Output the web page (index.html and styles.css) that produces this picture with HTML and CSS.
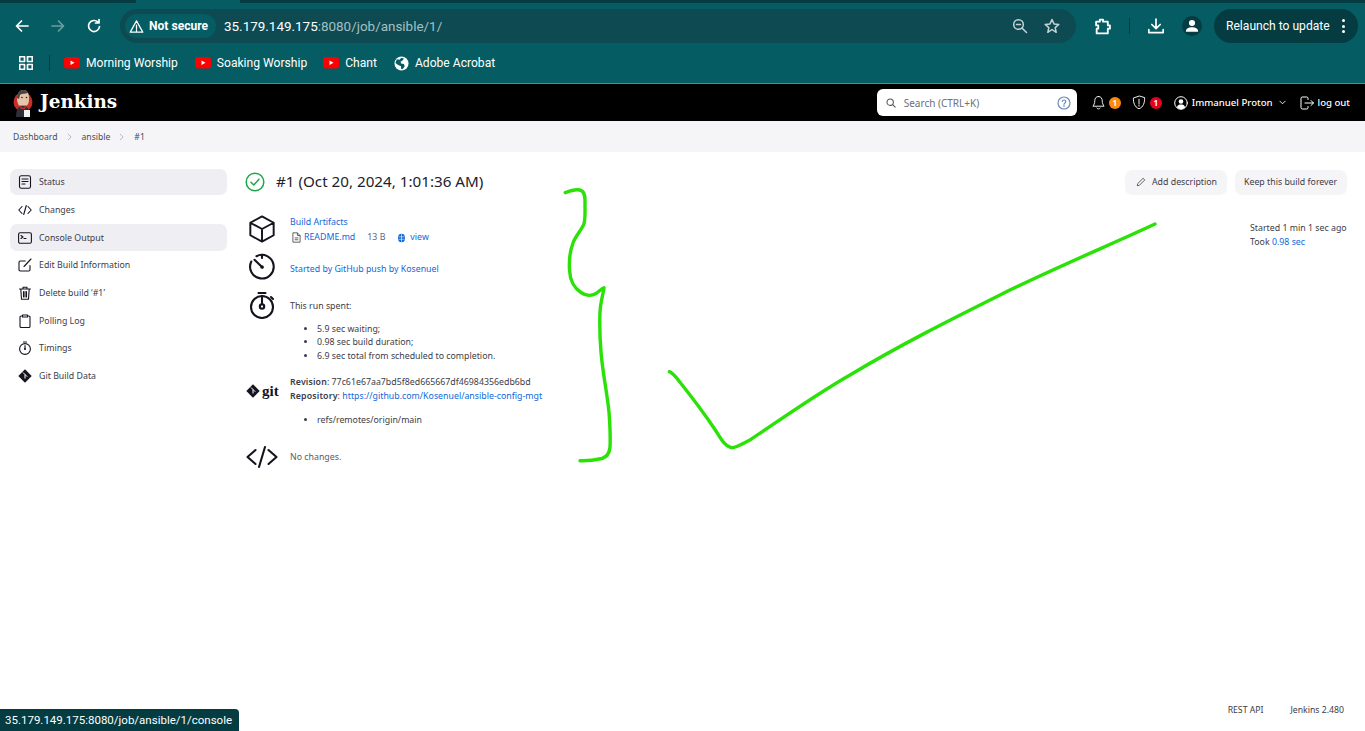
FILE: index.html
```html
<!DOCTYPE html>
<html lang="en">
<head>
<meta charset="utf-8">
<title>ansible #1 [Jenkins]</title>
<link rel="stylesheet" href="styles.css">
</head>
<body>
<div class="chrome">
  <div class="tabstrip"><div class="tab-active"></div></div>
  <div class="toolbar">
    <svg class="tb-ic" viewBox="0 0 16 16"><path d="M14 8H3M7.500 3 2.500 8l5 5" class="st-w"/></svg>
    <svg class="tb-ic dim" viewBox="0 0 16 16"><path d="M2 8h11M8.500 3l5 5-5 5" class="st-w"/></svg>
    <svg class="tb-ic" viewBox="0 0 16 16"><path d="M13.500 8.500A5.500 5.500 0 1 1 12 4.200M13 1.500v3.500H9.500" class="st-w"/></svg>
    <div class="omnibox">
      <div class="secure">
        <svg class="warn" viewBox="0 0 16 16"><path d="M8 2 1.300 14h13.400ZM8 6.500v4M8 11.500v1.200" class="st-w thin"/></svg>
        <span>Not secure</span>
      </div>
      <div class="url">35.179.149.175<span class="url-dim">:8080/job/ansible/1/</span></div>
      <svg class="omni-ic zoom-ic" viewBox="0 0 16 16"><circle cx="6.500" cy="6.500" r="4.800" class="st-g"/><path d="M10 10l4.500 4.500M4.500 6.500h4" class="st-g"/></svg>
      <svg class="omni-ic star-ic" viewBox="0 0 16 16"><path d="M8 1.500l2 4.400 4.800.5-3.600 3.200 1 4.700L8 11.500l-4.200 2.800 1-4.700L1.200 6.400 6 5.900Z" class="st-g"/></svg>
    </div>
    <svg class="tb-ic ext" viewBox="0 0 16 16"><path d="M2 3.500h3.500V1.500h3v2H13v3.500h2v3h-2v4.500H2.500V10H4V7H2Z" class="st-w"/></svg>
    <div class="tb-sep"></div>
    <svg class="tb-ic dl" viewBox="0 0 16 16"><path d="M8 1v9.500M3.800 6.500 8 10.700l4.200-4.200M.8 11.500v3.200h14.400v-3.200" class="st-w"/></svg>
    <div class="avatar"><svg viewBox="0 0 16 16"><circle cx="8" cy="4.500" r="3.500" class="fill-w"/><path d="M1 14.500c0-4 3.500-5 7-5s7 1 7 5Z" class="fill-w"/></svg></div>
    <div class="relaunch"><span>Relaunch to update</span><span class="dots"><i></i><i></i><i></i></span></div>
  </div>
  <div class="bookmarks">
    <svg class="apps" viewBox="0 0 14 14"><path d="M.7.7h4.800v4.800H.7zM8.500.7h4.800v4.800H8.500zM.7 8.500h4.800v4.800H.7zM8.500 8.500h4.800v4.800H8.500z" class="st-w"/></svg>
    <div class="bm-sep"></div>
    <div class="bm bm-a"><svg class="yt" viewBox="0 0 16 12"><rect width="16" height="11.500" rx="3" fill="#f00"/><path d="M6.500 3.500v4.500l4-2.250Z" fill="#fff"/></svg><span>Morning Worship</span></div>
    <div class="bm bm-b"><svg class="yt" viewBox="0 0 16 12"><rect width="16" height="11.500" rx="3" fill="#f00"/><path d="M6.500 3.500v4.500l4-2.250Z" fill="#fff"/></svg><span>Soaking Worship</span></div>
    <div class="bm bm-c"><svg class="yt" viewBox="0 0 16 12"><rect width="16" height="11.500" rx="3" fill="#f00"/><path d="M6.500 3.500v4.500l4-2.250Z" fill="#fff"/></svg><span>Chant</span></div>
    <div class="bm bm-d"><svg class="globe" viewBox="0 0 16 16"><circle cx="8" cy="8" r="7.500" class="fill-w"/><path d="M3 3.500l3 .5 1.500-2 3 .5-1 2-2.500 1.500.5 2 3 .5 1 2.500-2.500 3-1.500-.5V11L4.500 9.500 1.500 7.500Z" fill="#055c62"/></svg><span>Adobe Acrobat</span></div>
  </div>
</div>

<header class="jk-header">
  <svg class="jk-logo" viewBox="0 0 20 28">
    <circle cx="10" cy="13" r="9.500" fill="#c62f2b"/>
    <path d="M4 10c0-6 3-9 6.500-9S16 4 16 9c0 4-.5 6-2 7.500H6C5 15 4 13 4 10Z" fill="#e8c4a6"/>
    <path d="M4 9c0-5 3-8 6.500-8 2 0 3.500 1 4.500 3-3 1-7 .5-8 2L6 10Z" fill="#4a4344"/>
    <circle cx="9" cy="8.500" r=".8" fill="#222"/>
    <circle cx="13.500" cy="8.500" r=".8" fill="#222"/>
    <path d="M3 28c0-7 2-11 7-11s7 4 7 11Z" fill="#2d3038"/>
    <path d="M7 17l3 2 3-2-1 3H8Z" fill="#c62f2b"/>
    <rect x="11" y="21" width="6" height="7" fill="#f2f2f2"/>
  </svg>
  <div class="jk-name">Jenkins</div>
  <div class="search">
    <svg class="s-ic" viewBox="0 0 12 12"><circle cx="5" cy="5" r="3.800" class="st-s"/><path d="M8 8l3 3" class="st-s"/></svg>
    <span class="s-text">Search (CTRL+K)</span>
    <svg class="s-help" viewBox="0 0 14 14"><circle cx="7" cy="7" r="6" class="st-b"/><path d="M5.300 5.500C5.300 3.500 8.800 3.500 8.800 5.500 8.800 7 7 6.800 7 8.300M7 9.600v1" class="st-b"/></svg>
  </div>
  <svg class="h-bell" viewBox="0 0 14 16"><path d="M7 1.500c-3 0-4 2.500-4 4.500 0 3-1 4.500-2 6h12c-1-1.500-2-3-2-6 0-2-1-4.500-4-4.500ZM5.200 14c.5 1.300 3.100 1.300 3.600 0" class="st-h"/></svg>
  <span class="badge orange">1</span>
  <svg class="h-shield" viewBox="0 0 14 16"><path d="M7 1.200 1 3.200c0 5 1 9.500 6 11.500 5-2 6-6.500 6-11.500ZM7 4.500v5M7 10.800v1" class="st-h"/></svg>
  <span class="badge red">1</span>
  <svg class="h-user" viewBox="0 0 14 14"><circle cx="7" cy="7" r="6.300" class="st-h"/><circle cx="7" cy="5.500" r="2.300" class="fill-w"/><path d="M2.800 11.500C3.500 9 5 8.500 7 8.500s3.500.5 4.200 3A6 6 0 0 1 2.800 11.500Z" class="fill-w"/></svg>
  <span class="h-name">Immanuel Proton</span>
  <svg class="h-chev" viewBox="0 0 8 5"><path d="M1 1l3 3 3-3" class="st-h"/></svg>
  <svg class="h-out" viewBox="0 0 14 14"><path d="M8 3.500V2.200C8 1.500 7.500 1 6.800 1H2.200C1.500 1 1 1.500 1 2.200v9.600c0 .7.500 1.200 1.200 1.200h4.600c.7 0 1.200-.5 1.200-1.200v-1.300M5 7h8.500M11 4.500 13.500 7 11 9.500" class="st-h"/></svg>
  <span class="h-logout">log out</span>
</header>

<nav class="crumbs">
  <span>Dashboard</span>
  <svg class="crumb-ch" viewBox="0 0 6 10"><path d="M1 1l4 4-4 4"/></svg>
  <span>ansible</span>
  <svg class="crumb-ch" viewBox="0 0 6 10"><path d="M1 1l4 4-4 4"/></svg>
  <span>#1</span>
</nav>

<div class="page">
  <aside class="side">
    <div class="side-item active"><svg viewBox="0 0 14 14"><rect x="1.500" y=".8" width="11" height="12.400" rx="1.800" class="st-i"/><path d="M4 4h6M4 6.500h6M4 9h3" class="st-i"/></svg><span>Status</span></div>
    <div class="side-item"><svg viewBox="0 0 14 14"><path d="M4 3.500.8 7 4 10.500M10 3.500 13.200 7 10 10.500M8.300 2.500 5.700 11.500" class="st-i"/></svg><span>Changes</span></div>
    <div class="side-item active console"><svg viewBox="0 0 14 14"><rect x=".6" y="1.800" width="12.800" height="10.400" rx="1.500" class="st-i"/><path d="M3 4.500 5 6 3 7.500M6 7.500h2" class="st-i"/></svg><span>Console Output</span></div>
    <div class="side-item"><svg viewBox="0 0 14 14"><path d="M12 7.500v4.300c0 .7-.5 1.200-1.200 1.200H2.200c-.7 0-1.200-.5-1.200-1.200V4.200C1 3.500 1.500 3 2.200 3h5M6 8.500l7-7.500" class="st-i"/></svg><span>Edit Build Information</span></div>
    <div class="side-item"><svg viewBox="0 0 14 14"><path d="M1.500 3h11M5 3V1.200h4V3M2.800 3l.7 10.200h7L11.200 3M5.500 5.500v5.500M7 5.500v5.500M8.500 5.500v5.500" class="st-i"/></svg><span>Delete build ‘#1’</span></div>
    <div class="side-item"><svg viewBox="0 0 14 14"><path d="M4.500 2H3.200C2.500 2 2 2.500 2 3.200v9.100c0 .7.500 1.200 1.200 1.200h7.600c.7 0 1.200-.5 1.200-1.200V3.200C12 2.500 11.500 2 10.800 2H9.500M4.500 1h5v2h-5Z" class="st-i"/></svg><span>Polling Log</span></div>
    <div class="side-item"><svg viewBox="0 0 14 14"><circle cx="7" cy="8" r="5.400" class="st-i"/><path d="M5.500 1h3M7 4.500V8" class="st-i"/><circle cx="7" cy="8" r="1" fill="#14141f"/></svg><span>Timings</span></div>
    <div class="side-item"><svg viewBox="0 0 14 14"><path d="M7 .3 13.700 7 7 13.700.3 7Z" fill="#14141f"/><path d="M5 3.500 7 5.500v4M7 5.500l2.200 2.200" stroke="#fff" stroke-width="1" fill="none"/></svg><span>Git Build Data</span></div>
  </aside>

  <main class="content">
    <div class="title-row">
      <svg class="ok" viewBox="0 0 20 20"><circle cx="10" cy="10" r="8.800" fill="none" stroke="#1ea64b" stroke-width="1.500"/><path d="M6 10.300 8.800 13l5.200-5.800" fill="none" stroke="#1ea64b" stroke-width="1.500" stroke-linecap="round" stroke-linejoin="round"/></svg>
      <h1 class="title">#1 (Oct 20, 2024, 1:01:36 AM)</h1>
      <div class="actions">
        <div class="btn btn-desc"><svg viewBox="0 0 12 12"><path d="M1.500 10.500 2 8l6.500-6.500 2 2L4 10Z" class="st-pen"/></svg><span>Add description</span></div>
        <div class="btn btn-keep">Keep this build forever</div>
      </div>
    </div>
    <div class="body-row">
      <div class="details">
        <section class="row r-art">
          <svg class="big" viewBox="0 0 28 30"><path d="M14 1.500 26.500 8.300v13.400L14 28.500 1.500 21.700V8.300ZM1.500 8.300 14 15l12.500-6.700M14 15v13.500" class="st-big"/></svg>
          <div class="cell">
            <a class="link art-head">Build Artifacts</a>
            <div class="art-line">
              <svg class="doc" viewBox="0 0 10 12"><path d="M1 .8h5l3 3v7.400H1ZM6 .8v3h3M3 6.500h4M3 8.500h4" fill="none" stroke="#555" stroke-width="1"/></svg>
              <a class="link">README.md</a>
              <span class="size">13 B</span>
              <svg class="fp" viewBox="0 0 10 12"><ellipse cx="5" cy="6" rx="4.200" ry="5.200" fill="#1067d8"/><path d="M1.500 4.500h7M1.500 7.500h7M5 1v10" stroke="#fff" stroke-width=".7"/></svg>
              <a class="link">view</a>
            </div>
          </div>
        </section>
        <section class="row r-start">
          <svg class="big" viewBox="0 0 28 28"><path d="M8.500 3.200A11.800 11.800 0 1 1 3.300 8.500" class="st-big"/><path d="M14 1.700v3.300M6.500 6.800 14.500 14.500" class="st-big"/><circle cx="14" cy="14" r="1.800" fill="#14141f"/></svg>
          <div class="cell"><a class="link">Started by GitHub push by Kosenuel</a></div>
        </section>
        <section class="row r-spent">
          <svg class="big" viewBox="0 0 28 28"><circle cx="14" cy="16" r="11" class="st-big"/><path d="M10.500 2h7M14 5v8.500M23 6l2 2" class="st-big"/><circle cx="14" cy="15.500" r="2.200" class="st-big"/></svg>
          <div class="cell">
            <p class="spent">This run spent:</p>
            <ul class="list">
              <li>5.9 sec waiting;</li>
              <li>0.98 sec build duration;</li>
              <li>6.9 sec total from scheduled to completion.</li>
            </ul>
          </div>
        </section>
        <section class="row r-git">
          <div class="gitmark"><svg viewBox="0 0 14 14"><path d="M7 .3 13.700 7 7 13.700.3 7Z" fill="#14141f"/><path d="M5 3.500 7 5.500v4M7 5.500l2.200 2.200" stroke="#fff" stroke-width="1" fill="none"/></svg><span>git</span></div>
          <div class="cell">
            <div class="line"><b>Revision</b>: 77c61e67aa7bd5f8ed665667df46984356edb6bd</div>
            <div class="line"><b>Repository</b>: <a class="link">https://github.com/Kosenuel/ansible-config-mgt</a></div>
            <ul class="list refs"><li>refs/remotes/origin/main</li></ul>
          </div>
        </section>
        <section class="row r-none">
          <svg class="big" viewBox="0 0 32 24"><path d="M9.500 5 1.500 12l8 7M22.500 5l8 7-8 7M19 2l-6 20" class="st-big"/></svg>
          <div class="cell grey">No changes.</div>
        </section>
      </div>
      <div class="meta">
        <div>Started 1 min 1 sec ago</div>
        <div>Took <a class="link">0.98 sec</a></div>
      </div>
    </div>
  </main>
</div>

<footer class="foot">
  <span class="f-rest">REST API</span>
  <span class="f-ver">Jenkins 2.480</span>
</footer>

<svg class="ink" viewBox="0 0 1365 731">
  <path d="M565.300 192.700C572 190 578 188.500 582 191C585.500 193.500 585 199 585 205C585 213 585.500 221 583.500 225C580 232 575 237 573 243C569.500 252 569 261 569.500 270C570 280 574 288 581 292.500C586 296 592 296 596 293.500C599 291.500 601 289 604 287.700C603 295 600.500 302 600 312C599.500 325 600 340 601 352C602.500 372 607 392 609 412C610 425 610.500 437 610 447C609.500 453 607 457 602 458.500C595 460 587 461 580 460.700"/>
  <path d="M669.300 371.700C673 373 676 377 679 381C691 396 706 416 716 431C721 439 725 446 731 447.700C735 448.500 744 443 750 440C780 420 815 395 850 375C900 345 950 320 1000 295C1050 270 1110 245 1155 224"/>
</svg>
<div class="status-bubble">35.179.149.175:8080/job/ansible/1/console</div>
</body>
</html>
```

FILE: styles.css
```css
* { box-sizing: border-box; }
html, body { margin: 0; padding: 0; }
body {
  width: 1365px;
  height: 731px;
  overflow: hidden;
  position: relative;
  display: flex;
  flex-direction: column;
  background: #fff;
  color: #14141f;
  font-family: "Noto Sans", "Open Sans", sans-serif;
}
p, h1, ul { margin: 0; padding: 0; }
svg { display: block; flex: none; }

.st-w { fill: none; stroke: #fff; stroke-width: 1.7; stroke-linecap: round; stroke-linejoin: round; }
.st-w.thin { stroke-width: 1.3; }
.st-g { fill: none; stroke: #c3d4d6; stroke-width: 1.5; stroke-linecap: round; stroke-linejoin: round; }
.fill-w { fill: #fff; }
.st-s { fill: none; stroke: #555; stroke-width: 1.3; stroke-linecap: round; }
.st-b { fill: none; stroke: #6d8bb8; stroke-width: 1.2; stroke-linecap: round; }
.st-h { fill: none; stroke: #fff; stroke-width: 1; stroke-linecap: round; stroke-linejoin: round; }
.st-i { fill: none; stroke: #14141f; stroke-width: 1.1; stroke-linecap: round; stroke-linejoin: round; }
.st-pen { fill: none; stroke: #444; stroke-width: 1; stroke-linejoin: round; }
.st-big { fill: none; stroke: #14141f; stroke-width: 2.1; stroke-linecap: round; stroke-linejoin: round; }

/* browser chrome */
.chrome { height: 84px; background: #055c62; border-bottom: 1px solid #4c8d92; flex: none; font-family: Roboto, sans-serif; }
.tabstrip { height: 3px; background: #043c42; }
.tab-active { width: 104px; height: 3px; margin-left: 136px; background: #055c62; }
.toolbar { height: 40px; padding-top: 6px; display: flex; align-items: center; color: #fff; }
.tb-ic { width: 16px; height: 16px; margin-left: 20px; }
.tb-ic:first-child { margin-left: 14px; }
.tb-ic.dim { opacity: .4; }
.omnibox {
  width: 956px;
  height: 34px;
  margin-left: 18px;
  padding-left: 5px;
  border-radius: 17px;
  background: #0e4a52;
  display: flex;
  align-items: center;
}
.secure {
  width: 91px;
  height: 24px;
  border-radius: 12px;
  background: #055c62;
  display: flex;
  align-items: center;
  padding-left: 4px;
  gap: 5px;
  font-size: 12.100px;
  font-weight: 700;
}
.warn { width: 15px; height: 15px; }
.url { margin-left: 8px; font-size: 13.450px; white-space: nowrap; }
.url-dim { color: #a3c0c3; }
.omni-ic { width: 16px; height: 16px; }
.zoom-ic { margin-left: auto; }
.star-ic { margin-left: 16px; margin-right: 16px; }
.ext { margin-left: 18px; width: 17px; height: 17px; }
.tb-sep { width: 1px; height: 16px; background: #043c42; margin-left: 18px; }
.tb-ic.dl { margin-left: 18px; }
.avatar {
  width: 20px; height: 20px; border-radius: 50%;
  background: #043c42; margin-left: 18px; padding: 3px;
}
.relaunch {
  width: 144px; height: 34px; margin-left: 12px;
  border-radius: 17px; background: #043c42;
  display: flex; align-items: center; padding-left: 12px;
  font-size: 12.100px; white-space: nowrap;
}
.dots { display: flex; flex-direction: column; gap: 2.500px; margin-left: 12px; }
.dots i { width: 3px; height: 3px; border-radius: 50%; background: #fff; display: block; }
.bookmarks { height: 40px; display: flex; align-items: center; color: #fff; font-size: 12.100px; }
.apps { width: 14px; height: 14px; margin-left: 19px; }
.bm-sep { width: 1px; height: 16px; background: #043c42; margin-left: 16px; }
.bm { display: flex; align-items: center; gap: 6px; white-space: nowrap; }
.bm span { padding-bottom: 1px; }
.yt { width: 16px; height: 12px; }
.globe { width: 15px; height: 15px; }
.bm-a { margin-left: 14px; }
.bm-b { margin-left: 17px; }
.bm-c { margin-left: 16px; }
.bm-d { margin-left: 17px; }

/* Jenkins header */
.jk-header {
  height: 37px; flex: none; background: #000; color: #fff;
  display: flex; align-items: center; font-size: 9.600px; white-space: nowrap;
}
.jk-logo { width: 20px; height: 28px; margin-left: 13px; }
.jk-name {
  margin-left: 7px;
  padding-bottom: 2px;
  font-family: "DejaVu Serif", serif;
  font-weight: 700;
  font-size: 18.400px;
}
.search {
  width: 200px; height: 27px; margin-left: auto; border-radius: 6px;
  background: #fff; display: flex; align-items: center;
  color: #6d7078; font-size: 10px;
}
.s-ic { width: 10px; height: 10px; margin-left: 9px; }
.s-text { margin-left: 8px; }
.s-help { width: 14px; height: 14px; margin-left: auto; margin-right: 6px; }
.h-bell { width: 13px; height: 15px; margin-left: 15px; }
.badge {
  width: 12px; height: 12px; border-radius: 50%; margin-left: 4px;
  font-size: 8px; font-weight: 700; line-height: 12px; text-align: center; color: #fff;
}
.orange { background: #fb8a0e; }
.red { background: #e6001f; }
.h-shield { width: 14px; height: 15px; margin-left: 11px; }
.h-user { width: 14px; height: 14px; margin-left: 12px; }
.h-name { margin-left: 4px; font-weight: 500; }
.h-chev { width: 7px; height: 5px; margin-left: 6px; }
.h-out { width: 14px; height: 14px; margin-left: 14px; }
.h-logout { margin-left: 4px; margin-right: 15px; font-weight: 500; }

/* breadcrumbs */
.crumbs {
  height: 31px; flex: none; background: #f5f5f8;
  display: flex; align-items: center; padding-left: 13px;
  font-size: 8.600px; color: #4b4b55;
}
.crumb-ch { width: 5px; height: 8px; margin: 0 10px 0 9px; fill: none; stroke: #a8aab2; stroke-width: 1; }

/* page */
.page { flex: 1; display: flex; min-height: 0; }
.side {
  width: 217px; margin-left: 10px; padding-top: 17px;
  display: flex; flex-direction: column; gap: 1.740px;
  font-size: 8.800px; color: #3c3c48;
}
.side-item {
  height: 26px; display: flex; align-items: center; padding-left: 8px; gap: 7px;
  border-radius: 7px;
}
.side-item svg { width: 14px; height: 14px; }
.side-item.active { background: #eeeef3; }
.side-item.console { height: 27px; margin-bottom: -1px; }
.content { flex: 1; padding: 17px 18px 0 18px; min-width: 0; }
.title-row { height: 26px; display: flex; align-items: center; }
.ok { width: 20px; height: 20px; }
.title { margin-left: 11px; padding-bottom: 2px; font-size: 15.200px; font-weight: 400; color: #22222c; white-space: nowrap; }
.actions { margin-left: auto; display: flex; gap: 8px; }
.btn {
  height: 25px; border-radius: 7px; background: #f5f5f8;
  display: flex; align-items: center; font-size: 8.800px; color: #3c3c48; white-space: nowrap;
}
.btn-desc { width: 102px; padding-left: 11px; gap: 6px; }
.btn-desc svg { width: 10px; height: 10px; }
.btn-keep { width: 112px; padding-left: 9px; }
.body-row { display: flex; justify-content: space-between; }
.details { padding: 0 0 0 3px; font-size: 8.800px; color: #3c3c48; }
.row { display: flex; align-items: flex-start; }
.row .big { width: 28px; height: 28px; }
.cell { margin-left: 14px; }
.link { color: #1067d8; text-decoration: none; }
.r-art { margin-top: 20px; height: 32px; }
.r-art .cell { line-height: 15px; }
.art-line { display: flex; align-items: center; margin-left: 2px; }
.doc { width: 9px; height: 11px; margin-right: 3px; }
.size { margin-left: 12px; color: #5c6880; }
.fp { width: 9px; height: 10px; margin-left: 12px; margin-right: 4px; }
.r-start { margin-top: 6px; height: 28px; }
.r-start .cell { line-height: 28px; margin-top: 1.500px; }
.r-spent { margin-top: 9.500px; }
.spent { line-height: 14px; margin-top: 8.500px; }
.list { margin-top: 9.500px; padding-left: 27px; line-height: 13.800px; }
.r-git { margin-top: 12.500px; }
.gitmark { width: 32px; height: 28px; margin-left: -2px; margin-right: -2px; padding-top: 2px; display: flex; align-items: center; gap: 2px; font-family: "Liberation Serif", serif; font-weight: 700; font-size: 15px; color: #14141f; }
.gitmark svg { width: 14px; height: 14px; }
.gitmark span { line-height: 14px; }
.r-git .cell { line-height: 14px; margin-top: -1px; }
.r-git b { font-weight: 600; letter-spacing: .14px; }
.refs { margin-top: 11px; }
.r-none { margin-top: 16.500px; align-items: center; }
.r-none .big { width: 32px; height: 24px; margin-left: -2px; margin-right: -2px; }
.grey { color: #5c5c66; }
.meta { width: 97px; padding-top: 26px; line-height: 14px; font-size: 8.800px; color: #3c3c48; white-space: nowrap; }

.foot {
  flex: none; height: 28px; display: flex; justify-content: flex-end; gap: 27px;
  padding: 0 21px 0 0; font-size: 8.700px; color: #3c3c48;
}
.f-rest { margin-top: 1px; }
.f-ver { margin-top: 1px; }

/* overlays */
.ink { position: absolute; left: 0; top: 0; width: 1365px; height: 731px; fill: none; stroke: #2ae207; stroke-width: 3.400; stroke-linecap: round; stroke-linejoin: round; pointer-events: none; }
.status-bubble {
  position: absolute; left: 0; bottom: 0; height: 22px; width: 239px;
  background: #043c42; color: #fff; font-family: Roboto, sans-serif; font-size: 11.500px; line-height: 22px; padding-left: 5px;
  border-top-right-radius: 4px; white-space: nowrap;
}
```
